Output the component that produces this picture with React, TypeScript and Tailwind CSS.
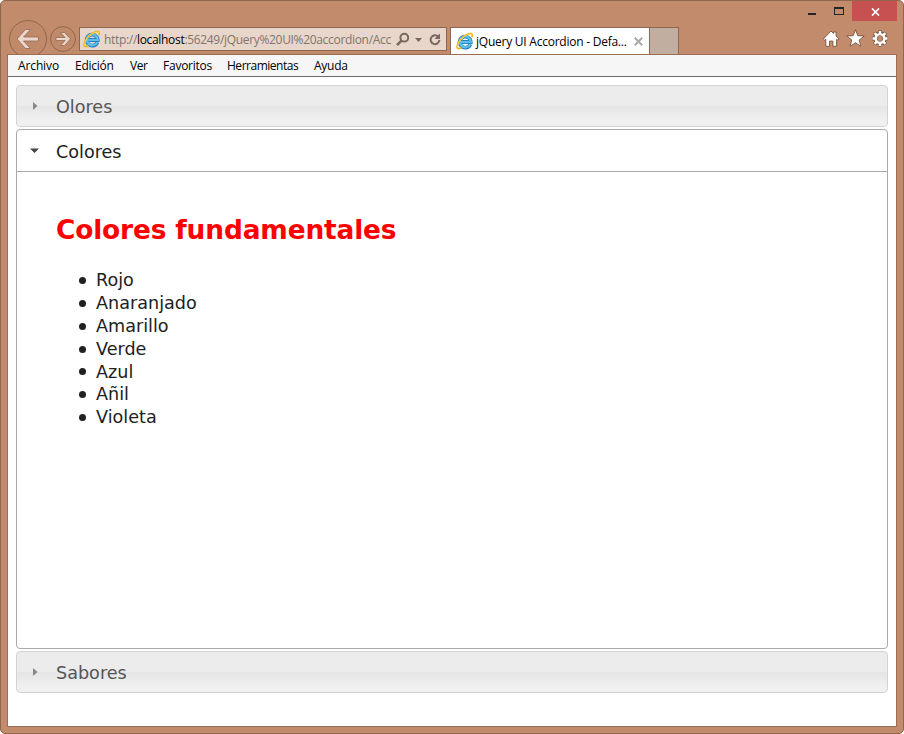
import React from "react";

const uiFont = "font-['Open_Sans','Noto_Sans',sans-serif]";

function IeLogo() {
  return (
    <svg width="18" height="18" viewBox="0 0 18 18" className="shrink-0">
      <path
        d="M14.300 12.200A5.500 5.500 0 1 1 14.700 10H5.500"
        fill="none"
        stroke="#2583c3"
        strokeWidth="3.800"
      />
      <path
        d="M14.200 12.200A5.400 5.400 0 1 1 14.700 10H5"
        fill="none"
        stroke="#5dbdec"
        strokeWidth="2.200"
      />
      <path
        d="M15.900 5.300C16.600 3.200 16.500 1.900 15.200 1.600 12.500 1.100 7.800 3.600 4.600 7.300 1.500 11 .3 15 1.600 16.200c.8.7 2.300.3 3.800-.7"
        fill="none"
        stroke="#f0b41a"
        strokeWidth="1.700"
      />
      <path
        d="M15.700 3.200c0-.9-.7-1.200-1.700-1.100C11.100 2.500 7 5 4.300 8.300 2 11.300 1 14.400 1.700 15.700"
        fill="none"
        stroke="#ffe15b"
        strokeWidth=".7"
      />
    </svg>
  );
}

function NavButtons() {
  return (
    <svg width="71" height="34" viewBox="8 20 71 34" className="shrink-0">
      <circle cx="28" cy="39" r="18.500" fill="#c0896a" stroke="#8f6650" />
      <circle cx="63" cy="39" r="12.500" fill="#c0896a" stroke="#8f6650" />
      <path
        d="M17 39 25.500 29.500h5l-7 7.500H38.500v4H23.500l7 7.500h-5Z"
        fill="#ead6ca"
        stroke="#946a54"
        strokeWidth=".8"
      />
      <path
        d="M70.500 39 64.500 32.500h-4l4.600 5H56v3h9.100l-4.600 5h4Z"
        fill="#ead6ca"
        stroke="#946a54"
        strokeWidth=".8"
      />
    </svg>
  );
}

function AddressIcons() {
  return (
    <svg width="54" height="22" viewBox="392 28 54 22" className="shrink-0">
      <g fill="none" stroke="#776860">
        <circle cx="404.300" cy="37.700" r="3.900" strokeWidth="2" />
        <path d="m401.500 40.700-4.500 4.500" strokeWidth="2.600" />
        <path d="M438.300 36.800a4.400 4.400 0 1 0 1.100 3.200" strokeWidth="2" />
      </g>
      <path d="M415 38h7l-3.500 4Z" fill="#776860" />
      <path d="M440 33.500v5.500h-5.500Z" fill="#776860" />
    </svg>
  );
}

function ToolIcons() {
  return (
    <svg width="72" height="24" viewBox="820 27 72 24" className="shrink-0">
      <g fill="#fff" stroke="#78543f" strokeLinejoin="round">
        <path
          strokeWidth=".9"
          d="m831 31 2.500 2.400V32h2.600v4l2.900 3-1.200 1.200-1.200-1V46.300h-3.700v-5.200h-3.400v5.200h-3.700v-7.100l-1.200 1-1.200-1.200Z"
        />
        <path
          strokeWidth=".9"
          d="m855.500 29.700 2.300 6 6.400.3-5 4 1.700 6.300-5.400-3.600-5.400 3.600 1.700-6.300-5-4 6.400-.3Z"
        />
      </g>
      <g fill="none" transform="translate(880 38.500)">
        <circle r="4.800" stroke="#78543f" strokeWidth="4.200" />
        <path
          d="M0-8V-5M0 5v3M-8 0H-5M5 0h3M-5.800-5.800l2 2M3.800 3.800l2 2M-5.800 5.800l2-2M3.800-3.800l2-2"
          stroke="#78543f"
          strokeWidth="3.600"
        />
        <path
          d="M0-7.500V-4M0 4v3.500M-7.500 0H-4M4 0h3.500M-5.400-5.400l2 2M3.400 3.400l2 2M-5.400 5.400l2-2M3.400-3.400l2-2"
          stroke="#fff"
          strokeWidth="2.500"
        />
        <circle r="4.400" stroke="#fff" strokeWidth="2.400" />
      </g>
    </svg>
  );
}

function WindowControls() {
  return (
    <div className="flex h-[20px] justify-end">
      <svg width="45" height="20" viewBox="807 1 45 20" shapeRendering="crispEdges">
        <path d="M808 13h8v2h-8Z" fill="#242424" />
        <path fillRule="evenodd" d="M834 7h10v8h-10ZM835 9v5h8V9Z" fill="#242424" />
      </svg>
      <div className="flex h-[20px] w-[45px] items-center justify-center bg-[#c75050] pl-px pt-px">
        <svg width="9" height="8" viewBox="0 0 9 8">
          <path d="m1 .5 7 7m0-7-7 7" stroke="#fff" strokeWidth="1.700" />
        </svg>
      </div>
    </div>
  );
}

function BrowserChrome() {
  return (
    <header className={`h-[53px] text-[12px] ${uiFont}`}>
      <div className="px-[6px]">
        <WindowControls />
      </div>
      <div className="flex h-[33px] pl-[7px] pr-[11px]">
        <div className="-mt-px h-[34px]">
          <NavButtons />
        </div>
        <div className="mt-[6px] flex h-[24px] w-[368px] shrink-0 items-center border border-[#8f6650] bg-[#e8d6ca] pl-[3px]">
          <IeLogo />
          <span className="ml-[3px] w-[288px] shrink-0 whitespace-nowrap pt-[2px] tracking-[-0.320px] text-[#80756e]">
            http://<span className="text-black">localhost</span>:56249/jQuery%20UI%20accordion/Acc
          </span>
          <AddressIcons />
        </div>
        <div className="ml-[3px] mt-[6px] flex h-[27px] w-[200px] shrink-0 items-center border-x border-t border-[#8f6650] bg-white pl-[5px]">
          <IeLogo />
          <span className="ml-[2px] w-[158px] whitespace-nowrap pt-[2px] tracking-[-0.020em] text-black">
            jQuery UI Accordion - Defa...
          </span>
          <svg width="9" height="9" viewBox="0 0 9 9" className="shrink-0">
            <path d="m.8.8 7.400 7.400m0-7.400L.8 8.200" stroke="#a9a9a9" strokeWidth="2" />
          </svg>
        </div>
        <div className="mt-[6px] h-[27px] w-[29px] border-r border-t border-[#8f6650] bg-[#c2aea0]" />
        <div className="ml-auto mt-[6px]">
          <ToolIcons />
        </div>
      </div>
    </header>
  );
}

function MenuBar() {
  return (
    <nav className={`flex h-[22px] items-center border-b border-[#6d6d6d] bg-[#f6f6f6] pl-[10px] pt-px text-[12px] text-black ${uiFont}`}>
      <span className="w-[57px] tracking-[-0.010em]">Archivo</span>
      <span className="w-[55px] tracking-[-0.020em]">Edición</span>
      <span className="w-[33px] tracking-[-0.040em]">Ver</span>
      <span className="w-[64px] tracking-[-0.020em]">Favoritos</span>
      <span className="w-[87px] tracking-[-0.040em]">Herramientas</span>
      <span className="tracking-[-0.020em]">Ayuda</span>
    </nav>
  );
}

function ClosedHeader({ title }: { title: string }) {
  return (
    <h3 className="flex h-[42px] items-center rounded-[4px] border border-[#d3d3d3] bg-[linear-gradient(to_bottom,#ececec_0%,#ececec_50%,#e5e5e5_50%,#f0f0f0_85%,#f0f0f0_100%)] pl-[16px] text-[#555555]">
      <svg width="23" height="8" viewBox="0 0 23 8">
        <path d="M0 0 4.500 4 0 8Z" fill="#888" />
      </svg>
      <span className="pt-[2px]">{title}</span>
    </h3>
  );
}

const colors = ["Rojo", "Anaranjado", "Amarillo", "Verde", "Azul", "Añil", "Violeta"];

export default function App() {
  return (
    <div className="flex h-[734px] w-[904px] flex-col overflow-hidden rounded-[5px] border border-[#8f6650] bg-[#c28c6c]">
      <BrowserChrome />
      <div className="mx-[6px] mb-[6px] flex flex-1 flex-col border border-[#9c6f55] bg-white">
        <MenuBar />
        <main className="flex flex-col px-[8px] pt-[8px] font-['DejaVu_Sans',sans-serif] text-[17.600px] text-[#212121]">
          <ClosedHeader title="Olores" />
          <section className="my-[2px] h-[520px] rounded-[4px] border border-[#aaaaaa]">
            <h3 className="flex h-[42px] items-center border-b border-[#aaaaaa] pl-[13px]">
              <svg width="26" height="6" viewBox="0 0 26 6">
                <path d="M0 .5h9L4.500 5Z" fill="#454545" />
              </svg>
              <span className="pt-[3px]">Colores</span>
            </h3>
            <div className="pl-[39px] pt-[41px]">
              <h2 className="text-[26.400px] font-bold leading-[34px] tracking-[-0.150px] text-[#ff0000]">Colores fundamentales</h2>
              <ul className="mt-[22px] leading-[22.880px]">
                {colors.map((color) => (
                  <li key={color} className="flex items-center pl-[23px]">
                    <span className="mr-[10px] size-[7px] rounded-full bg-[#212121]" />
                    {color}
                  </li>
                ))}
              </ul>
            </div>
          </section>
          <ClosedHeader title="Sabores" />
        </main>
      </div>
    </div>
  );
}
